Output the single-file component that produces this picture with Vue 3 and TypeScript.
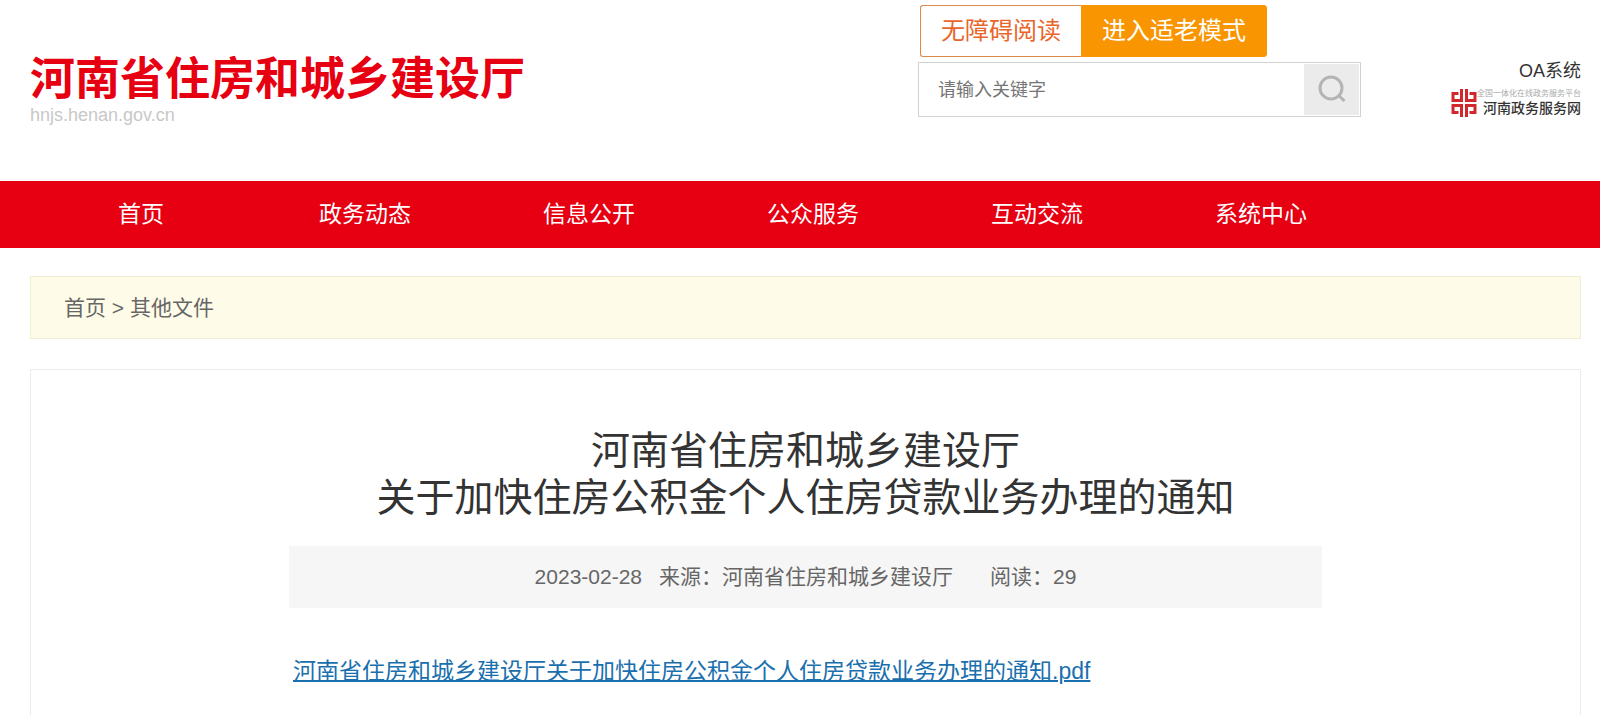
<script setup lang="ts">
import { ref } from 'vue'

interface NavItem {
  label: string
  href: string
}

const keyword = ref('')

const navItems: NavItem[] = [
  { label: '首页', href: '#home' },
  { label: '政务动态', href: '#news' },
  { label: '信息公开', href: '#open' },
  { label: '公众服务', href: '#service' },
  { label: '互动交流', href: '#interact' },
  { label: '系统中心', href: '#system' },
]
</script>

<template>
  <div class="page">
    <header class="header">
      <div class="brand">
        <a class="brand-name" href="#home">河南省住房和城乡建设厅</a>
        <span class="brand-domain">hnjs.henan.gov.cn</span>
      </div>

      <div class="tools">
        <div class="modes">
          <button class="mode mode-read" type="button">无障碍阅读</button>
          <button class="mode mode-elder" type="button">进入适老模式</button>
        </div>
        <form class="search" role="search" @submit.prevent>
          <input
            v-model="keyword"
            class="search-input"
            type="text"
            aria-label="请输入关键字"
            placeholder="请输入关键字"
          />
          <button class="search-button" type="submit" aria-label="搜索">
            <svg class="search-icon" viewBox="0 0 30 30" aria-hidden="true">
              <circle cx="14" cy="14" r="11" />
              <path d="M21 21 27.5 27" />
            </svg>
          </button>
        </form>
      </div>

      <div class="portals">
        <a class="oa" href="#oa">OA系统</a>
        <a class="portal" href="#portal">
          <svg class="portal-icon" viewBox="0 0 26 28" aria-hidden="true">
            <path d="M10.5 0V11.5H2V4.5H7.5M15.5 0V11.5H24V4.5H18.5M10.5 28V16.5H2V23.5H7.5M15.5 28V16.5H24V23.5H18.5" />
          </svg>
          <span class="portal-text">
            <span class="portal-sub">全国一体化在线政务服务平台</span>
            <span class="portal-name">河南政务服务网</span>
          </span>
        </a>
      </div>
    </header>

    <nav class="nav">
      <a v-for="item in navItems" :key="item.label" class="nav-link" :href="item.href">{{ item.label }}</a>
    </nav>

    <div class="crumbs">
      <a href="#home">首页</a> &gt; <a href="#files">其他文件</a>
    </div>

    <main class="article">
      <h1 class="title">河南省住房和城乡建设厅<br />关于加快住房公积金个人住房贷款业务办理的通知</h1>
      <div class="meta">
        <span>2023-02-28</span>
        <span>来源：河南省住房和城乡建设厅</span>
        <span class="reads">阅读：29</span>
      </div>
      <div class="content">
        <a class="file" href="#pdf">河南省住房和城乡建设厅关于加快住房公积金个人住房贷款业务办理的通知.pdf</a>
      </div>
    </main>
  </div>
</template>

<style>
body {
  margin: 0;
  background: #fff;
}
</style>

<style scoped>
.page {
  display: flex;
  flex-direction: column;
  min-height: 100vh;
  font-family: "Liberation Sans", "Noto Sans CJK SC", sans-serif;
  color: #333;
}

.page *,
.page {
  box-sizing: border-box;
}

.page a {
  color: inherit;
  text-decoration: none;
}

.header {
  display: flex;
  align-items: flex-start;
  padding: 5px 19px 56px 30px;
}

.brand {
  display: flex;
  flex-direction: column;
  padding-top: 50px;
}

.page .brand-name {
  font-size: 45px;
  font-weight: 700;
  line-height: 50px;
  color: #e60012;
}

.brand-domain {
  font-size: 18px;
  line-height: 20px;
  color: #c8c8c8;
}

.tools {
  width: 443px;
  margin-left: auto;
}

.modes {
  display: flex;
  padding-left: 2px;
}

.mode {
  height: 52px;
  padding: 0 20px;
  border: 1px solid #f99500;
  font-family: inherit;
  font-size: 24px;
  line-height: 36px;
}

.mode-read {
  border-color: #dc8a4c;
  border-right: 0;
  border-radius: 3px 0 0 3px;
  background: #fff;
  color: #e8662a;
}

.mode-elder {
  border-radius: 0 3px 3px 0;
  background: #f99500;
  color: #fff;
}

.search {
  display: flex;
  height: 55px;
  margin-top: 5px;
  padding: 1px;
  border: 1px solid #d2d2d2;
}

.search-input {
  flex: 1;
  min-width: 0;
  padding: 1px 18px 0;
  border: 0;
  background: transparent;
  font-family: inherit;
  font-size: 18px;
  color: #333;
  outline: none;
}

.search-input::placeholder {
  color: #757575;
  opacity: 1;
}

.search-button {
  display: flex;
  align-items: center;
  justify-content: center;
  width: 55px;
  padding: 0 0 2px;
  border: 0;
  background: #ebebeb;
}

.search-icon {
  width: 30px;
  height: 30px;
  fill: none;
  stroke: #b4b4b4;
  stroke-width: 3;
}

.portals {
  display: flex;
  flex-direction: column;
  align-items: flex-end;
  margin-left: 90px;
  padding-top: 53px;
}

.oa {
  font-size: 18px;
  line-height: 26px;
}

.portal {
  display: flex;
  align-items: center;
  margin-top: 5px;
}

.portal-icon {
  width: 26px;
  height: 28px;
  fill: none;
  stroke: #d2282d;
  stroke-width: 3;
}

.portal-text {
  display: flex;
  flex-direction: column;
  align-items: flex-end;
}

.portal-sub {
  font-size: 8px;
  line-height: 10px;
  color: #aaa;
}

.portal-name {
  font-size: 14px;
  font-weight: 500;
  line-height: 18px;
}

.nav {
  display: flex;
  padding: 0 29px;
  background: #e60012;
}

.nav-link {
  width: 14vw;
  font-size: 23px;
  line-height: 67px;
  text-align: center;
}

.page .nav-link {
  color: #fff;
}

.crumbs {
  margin: 28px 19px 0 30px;
  padding: 0 33px;
  border: 1px solid #f0eed2;
  background: #fefbe8;
  font-size: 21px;
  line-height: 61px;
  color: #666;
}

.article {
  flex: 1;
  margin: 30px 19px 0 30px;
  padding: 57px 16% 0;
  border: 1px solid #ebebeb;
  border-bottom: 0;
}

.title {
  margin: 0 -100px;
  font-size: 39px;
  font-weight: 400;
  line-height: 47px;
  text-align: center;
}

.meta {
  display: flex;
  justify-content: center;
  gap: 17px;
  margin: 25px 2px 0;
  background: #f6f6f6;
  font-size: 21px;
  line-height: 62px;
  color: #666;
}

.reads {
  margin-left: 20px;
}

.content {
  margin-top: 45px;
  padding-left: 6px;
  font-size: 23px;
  line-height: 36px;
}

.page .file {
  color: #1a6fae;
  text-decoration: underline;
  text-decoration-thickness: 2px;
}
</style>
